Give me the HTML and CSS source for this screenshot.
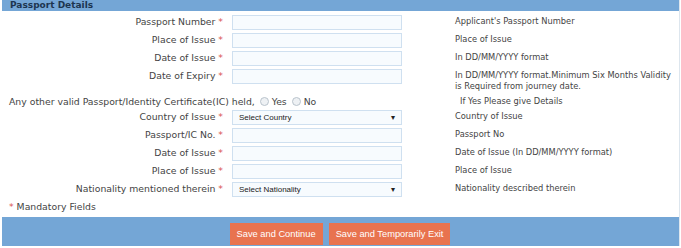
FILE: index.html
```html
<!DOCTYPE html>
<html lang="en">
<head>
  <meta charset="UTF-8">
  <title>Passport Details</title>
  <link rel="stylesheet" href="styles.css">
</head>
<body>
  <div class="panel">
    <div class="panel-head">Passport Details</div>

    <div class="form">
      <div class="row">
        <label class="lbl">Passport Number <span class="req">*</span></label>
        <input type="text" class="field">
        <div class="help">Applicant's Passport Number</div>
      </div>
      <div class="row">
        <label class="lbl">Place of Issue <span class="req">*</span></label>
        <input type="text" class="field">
        <div class="help">Place of Issue</div>
      </div>
      <div class="row">
        <label class="lbl">Date of Issue <span class="req">*</span></label>
        <input type="text" class="field">
        <div class="help">In DD/MM/YYYY format</div>
      </div>
      <div class="row row-tall">
        <label class="lbl">Date of Expiry <span class="req">*</span></label>
        <input type="text" class="field">
        <div class="help">In DD/MM/YYYY format.Minimum Six Months Validity is Required from journey date.</div>
      </div>

      <div class="row row-wide">
        <div class="question">Any other valid Passport/Identity Certificate(IC) held,
          <span class="radio"></span> Yes <span class="radio"></span> No</div>
        <div class="help help-q">If Yes Please give Details</div>
      </div>

      <div class="row">
        <label class="lbl">Country of Issue <span class="req">*</span></label>
        <div class="field select">Select Country <span class="caret">&#9662;</span></div>
        <div class="help">Country of Issue</div>
      </div>
      <div class="row">
        <label class="lbl">Passport/IC No. <span class="req">*</span></label>
        <input type="text" class="field">
        <div class="help">Passport No</div>
      </div>
      <div class="row">
        <label class="lbl">Date of Issue <span class="req">*</span></label>
        <input type="text" class="field">
        <div class="help">Date of Issue (In DD/MM/YYYY format)</div>
      </div>
      <div class="row">
        <label class="lbl">Place of Issue <span class="req">*</span></label>
        <input type="text" class="field">
        <div class="help">Place of Issue</div>
      </div>
      <div class="row">
        <label class="lbl">Nationality mentioned therein <span class="req">*</span></label>
        <div class="field select">Select Nationality <span class="caret">&#9662;</span></div>
        <div class="help">Nationality described therein</div>
      </div>

      <div class="mandatory"><span class="req">*</span> Mandatory Fields</div>
    </div>

    <div class="panel-foot">
      <button class="btn">Save and Continue</button>
      <button class="btn">Save and Temporarily Exit</button>
    </div>
  </div>
</body>
</html>
```

FILE: styles.css
```css
body {
  margin: 0;
  background-color: #fff;
  font-family: "DejaVu Sans", Verdana, sans-serif;
  color: #444;
}
.panel {
  margin-left: 2px;
  width: 677px;
  border-right: 1px solid #dde6ee;
}
.panel-head {
  height: 11px;
  line-height: 11px;
  padding-left: 8px;
  background-color: #74a6d6;
  color: #1d3550;
  font-weight: bold;
  font-size: 9px;
}
.form {
  padding-top: 4px;
  padding-bottom: 3px;
}
.row {
  display: flex;
  align-items: flex-start;
  height: 18px;
}
.row-tall {
  height: 24px;
}
.row-wide {
  height: 17px;
  align-items: center;
}
.lbl {
  width: 221px;
  text-align: right;
  font-size: 9.3px;
  line-height: 14px;
  color: #444;
}
.req {
  color: #d9534f;
}
.field {
  box-sizing: border-box;
  width: 170px;
  height: 15px;
  margin-left: 9px;
  border: 1px solid #cfe0f0;
  background-color: #f7fbfe;
  padding: 0 6px;
  font-family: "Liberation Sans", Arial, sans-serif;
}
.select {
  display: flex;
  align-items: center;
  justify-content: space-between;
  font-size: 8px;
  color: #222;
}
.caret {
  font-size: 8px;
  color: #222;
}
.help {
  margin-left: 53px;
  width: 218px;
  font-size: 8.3px;
  line-height: 11px;
  padding-top: 1px;
  color: #444;
}
.question {
  width: 446px;
  padding-left: 7px;
  font-size: 9.3px;
  line-height: 14px;
}
.help-q {
  margin-left: 5px;
  padding-top: 0;
}
.radio {
  display: inline-block;
  width: 7px;
  height: 7px;
  border: 1px solid #b9c3cc;
  border-radius: 50%;
  background-color: #eef1f4;
  vertical-align: -1px;
  margin-left: 2px;
}
.mandatory {
  padding-left: 7px;
  font-size: 9.3px;
  line-height: 14px;
}
.panel-foot {
  box-sizing: border-box;
  height: 29px;
  padding-top: 6px;
  background-color: #74a6d6;
  display: flex;
  justify-content: center;
  align-items: flex-start;
  gap: 6px;
  padding-right: 1px;
}
.btn {
  height: 22px;
  padding: 0 7px;
  border: none;
  background-color: #e8734f;
  color: #fff;
  font-family: "Liberation Sans", Arial, sans-serif;
  font-size: 9.3px;
  cursor: pointer;
}
```
